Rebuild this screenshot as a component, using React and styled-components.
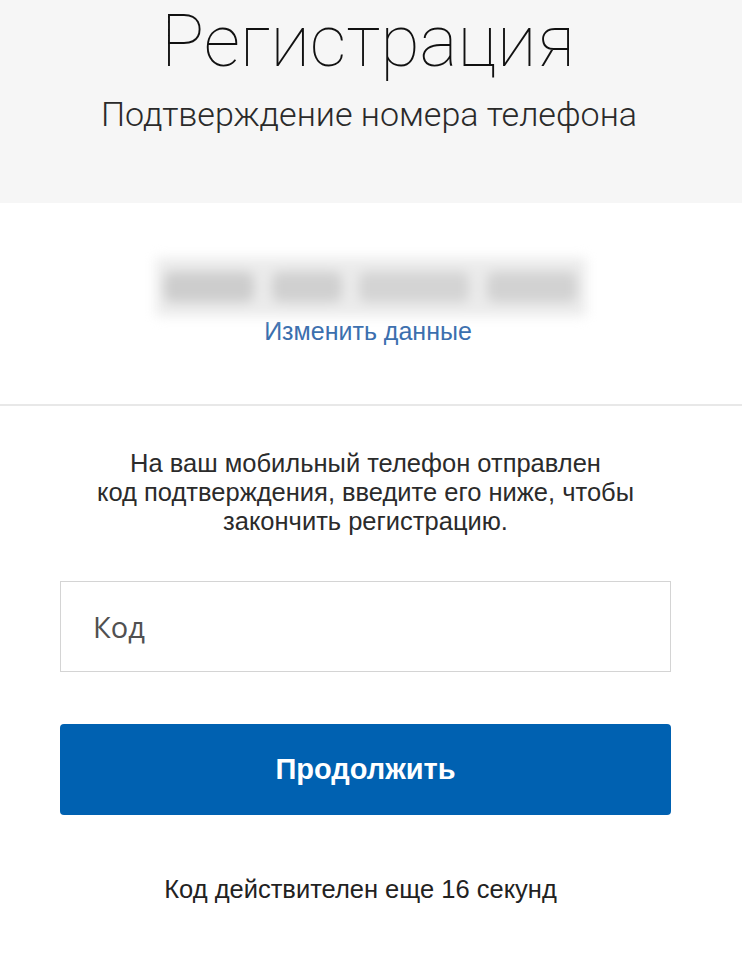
import styled, { createGlobalStyle } from 'styled-components';

const GlobalStyle = createGlobalStyle`
    html, body {
        margin: 0;
        padding: 0;
        background: #ffffff;
    }
`;

const App = () => {
    return (
        <Page>
            <GlobalStyle />
            <Header>
                <Title>Регистрация</Title>
                <Subtitle>Подтверждение номера телефона</Subtitle>
            </Header>
            <UserBlock>
                <Blurred>
                    <BlurSpot $w={90} $tone="#cdcdcd" />
                    <BlurSpot $w={70} $tone="#d0d0d0" />
                    <BlurSpot $w={110} $tone="#d4d4d4" />
                    <BlurSpot $w={90} $tone="#d2d2d2" />
                </Blurred>
                <EditLink href="#">Изменить данные</EditLink>
            </UserBlock>
            <Divider />
            <Form>
                <Notice>
                    На ваш мобильный телефон отправлен<br />
                    код подтверждения, введите его ниже, чтобы<br />
                    закончить регистрацию.
                </Notice>
                <CodeInput placeholder="Код" />
                <SubmitButton>Продолжить</SubmitButton>
                <Timer>Код действителен еще 16 секунд</Timer>
            </Form>
        </Page>
    );
};

const Page = styled.div`
    width: 742px;
    min-height: 968px;
    background: #ffffff;
    font-family: 'Liberation Sans', Arial, sans-serif;
`;

const Header = styled.div`
    height: 203px;
    background: #f6f6f6;
    display: flex;
    flex-direction: column;
    align-items: center;
`;

const Title = styled.h1`
    margin: 0 0 0 -6px;
    font-family: Roboto, sans-serif;
    font-weight: 100;
    font-size: 72px;
    line-height: 84px;
    color: #111111;
`;

const Subtitle = styled.div`
    margin-top: 10px;
    margin-left: -4px;
    font-family: Roboto, sans-serif;
    font-weight: 300;
    font-size: 34px;
    color: #2a2a2a;
`;

const UserBlock = styled.div`
    height: 201px;
    display: flex;
    flex-direction: column;
    align-items: center;
    box-sizing: border-box;
    padding-top: 55px;
`;

const Blurred = styled.div`
    width: 430px;
    height: 58px;
    margin-left: -1px;
    background: #ebebeb;
    display: flex;
    align-items: center;
    justify-content: space-around;
    filter: blur(6px);
`;

const BlurSpot = styled.div`
    width: ${p => p.$w}px;
    height: 30px;
    background: ${p => p.$tone};
    border-radius: 8px;
`;

const EditLink = styled.a`
    margin-top: 0;
    margin-left: -6px;
    font-size: 25px;
    line-height: 30px;
    color: #3b6fae;
    text-decoration: none;
`;

const Divider = styled.div`
    height: 2px;
    background: #e8e8e8;
`;

const Form = styled.div`
    display: flex;
    flex-direction: column;
    align-items: center;
    padding: 43px 71px 0 60px;
`;

const Notice = styled.p`
    margin: 0;
    font-size: 25.5px;
    line-height: 29px;
    color: #2b2b2b;
    text-align: center;
`;

const CodeInput = styled.input`
    margin-top: 45px;
    width: 100%;
    height: 91px;
    box-sizing: border-box;
    border: 1px solid #d4d4d4;
    padding: 0 32px;
    font-family: 'Open Sans', sans-serif;
    font-size: 29px;
    outline: none;

    &::placeholder {
        color: #505050;
    }
`;

const SubmitButton = styled.button`
    margin-top: 52px;
    width: 100%;
    height: 91px;
    border: none;
    border-radius: 4px;
    background: #0061b1;
    color: #ffffff;
    font-family: 'Liberation Sans', Arial, sans-serif;
    font-weight: 700;
    font-size: 29px;
`;

const Timer = styled.div`
    margin-top: 60px;
    margin-left: -10px;
    font-size: 25.5px;
    color: #222222;
`;

export default App;
